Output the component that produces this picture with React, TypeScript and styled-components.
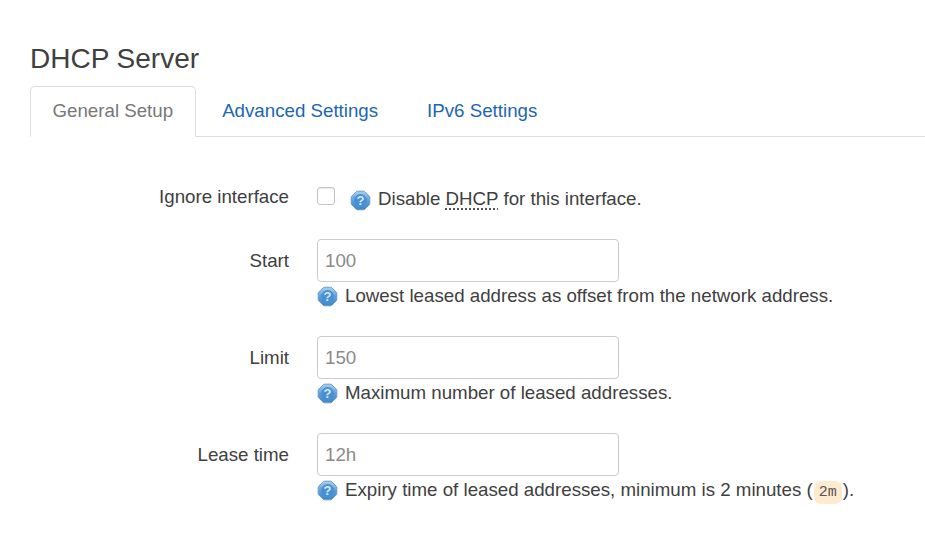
import styled, { createGlobalStyle } from "styled-components"

const GlobalStyle = createGlobalStyle`
  html, body {
    margin: 0;
    padding: 0;
    background: #fff;
    overflow: hidden;
  }
  body {
    font-family: "Liberation Sans", Arial, sans-serif;
    font-size: 18.72px;
    color: #404040;
  }
`
const Page = styled.div`
  width: 925px;
  height: 536px;
  box-sizing: border-box;
  padding: 43px 0 0 30px;
`
const Title = styled.h2`
  margin: 0 0 12px;
  font-size: 28px;
  line-height: 31px;
  font-weight: 400;
  color: #404040;
`
const Tabs = styled.ul`
  display: flex;
  margin: 0;
  padding: 0;
  list-style: none;
  height: 50px;
  border-bottom: 1px solid #ddd;
`
const Tab = styled.li<{ $active?: boolean }>`
  box-sizing: border-box;
  height: 51px;
  padding: 0 21.5px 2px;
  margin-right: 4px;
  display: flex;
  align-items: center;
  border: 1px solid ${(p) => (p.$active ? "#ddd" : "transparent")};
  border-bottom-color: ${(p) => (p.$active ? "#fff" : "transparent")};
  border-radius: 5px 5px 0 0;
  background: ${(p) => (p.$active ? "#fff" : "transparent")};
  color: ${(p) => (p.$active ? "#777" : "#1c66b4")};
`
const Form = styled.div`
  display: flex;
  flex-direction: column;
  padding-top: 47px;
`
const Row = styled.div<{ $gap: number }>`
  display: grid;
  grid-template-columns: 259px 1fr;
  column-gap: 28px;
  margin-bottom: ${(p) => p.$gap}px;
`
const Label = styled.label`
  text-align: right;
  line-height: 26px;
  padding-top: 9px;
  color: #404040;
`
const CheckLabel = styled(Label)`
  padding-top: 0;
`
const Field = styled.div`
  display: flex;
  flex-direction: column;
  align-items: flex-start;
`
const Input = styled.input`
  box-sizing: border-box;
  width: 302px;
  height: 43px;
  padding: 0 7px;
  border: 1px solid #ccc;
  border-radius: 4px;
  font-family: inherit;
  font-size: 18.72px;
  background: #fff;
  &::placeholder {
    color: #8a8a8a;
    opacity: 1;
  }
`
const CheckLine = styled.div`
  display: flex;
  align-items: center;
  height: 26px;
  padding-top: 2px;
`
const Checkbox = styled.span`
  box-sizing: border-box;
  width: 18px;
  height: 18px;
  margin: -6px 15px 0 0;
  border: 1px solid #c4c4c4;
  border-radius: 3px;
  background: #fff;
  box-shadow: inset 0 1px 1px rgba(0, 0, 0, 0.08);
`
const Help = styled.div`
  display: flex;
  align-items: center;
  gap: 7px;
  height: 27px;
  white-space: pre;
`
const CheckText = styled.span`
  margin-left: 7px;
  white-space: pre;
`
const Abbr = styled.abbr`
  text-decoration: underline dotted 2px #555;
  text-underline-offset: 3px;
  text-decoration-skip-ink: none;
`
const Code = styled.code`
  margin: 0 1px 0 1px;
  padding: 3px 5px 3px;
  font-family: "Liberation Mono", monospace;
  font-size: 15px;
  line-height: 1;
  border-radius: 7px;
  background: #fdeacf;
  color: #555;
`

const HelpIcon = () => (
  <svg width="21" height="21" viewBox="0 0 21 21" style={{ marginTop: 2, flex: "none" }}>
    <defs>
      <linearGradient id="helpFill" x1="0" y1="0" x2="0" y2="1">
        <stop offset="0" stopColor="#a9d2f0" />
        <stop offset="0.5" stopColor="#5aa0dc" />
        <stop offset="1" stopColor="#3d86c8" />
      </linearGradient>
    </defs>
    <path
      d="M7.5 1.2h6a2 2 0 0 1 1.4.6l4.3 4.3a2 2 0 0 1 .6 1.4v6a2 2 0 0 1-.6 1.4l-4.3 4.3a2 2 0 0 1-1.4.6h-6a2 2 0 0 1-1.4-.6l-4.3-4.3a2 2 0 0 1-.6-1.4v-6a2 2 0 0 1 .6-1.4l4.3-4.3a2 2 0 0 1 1.4-.6z"
      fill="url(#helpFill)"
      stroke="#6d9cc4"
      strokeWidth="1"
    />
    <circle cx="10.5" cy="10.5" r="6.4" fill="#4a90d0" />
    <text
      x="10.5"
      y="15"
      textAnchor="middle"
      fontFamily="Liberation Sans, sans-serif"
      fontSize="13"
      fontWeight="700"
      fill="#d4e8f8"
    >
      ?
    </text>
  </svg>
)

const App = () => {
  return (
    <Page>
      <GlobalStyle />
      <Title>DHCP Server</Title>
      <Tabs>
        <Tab $active>General Setup</Tab>
        <Tab>Advanced Settings</Tab>
        <Tab>IPv6 Settings</Tab>
      </Tabs>
      <Form>
        <Row $gap={27}>
          <CheckLabel>Ignore interface</CheckLabel>
          <CheckLine>
            <Checkbox />
            <HelpIcon />
            <CheckText>
              Disable <Abbr>DHCP</Abbr> for this interface.
            </CheckText>
          </CheckLine>
        </Row>
        <Row $gap={27}>
          <Label>Start</Label>
          <Field>
            <Input placeholder="100" />
            <Help>
              <HelpIcon />
              Lowest leased address as offset from the network address.
            </Help>
          </Field>
        </Row>
        <Row $gap={27}>
          <Label>Limit</Label>
          <Field>
            <Input placeholder="150" />
            <Help>
              <HelpIcon />
              Maximum number of leased addresses.
            </Help>
          </Field>
        </Row>
        <Row $gap={0}>
          <Label>Lease time</Label>
          <Field>
            <Input placeholder="12h" />
            <Help>
              <HelpIcon />
              <span>
                Expiry time of leased addresses, minimum is 2 minutes (<Code>2m</Code>).
              </span>
            </Help>
          </Field>
        </Row>
      </Form>
    </Page>
  )
}

export default App
